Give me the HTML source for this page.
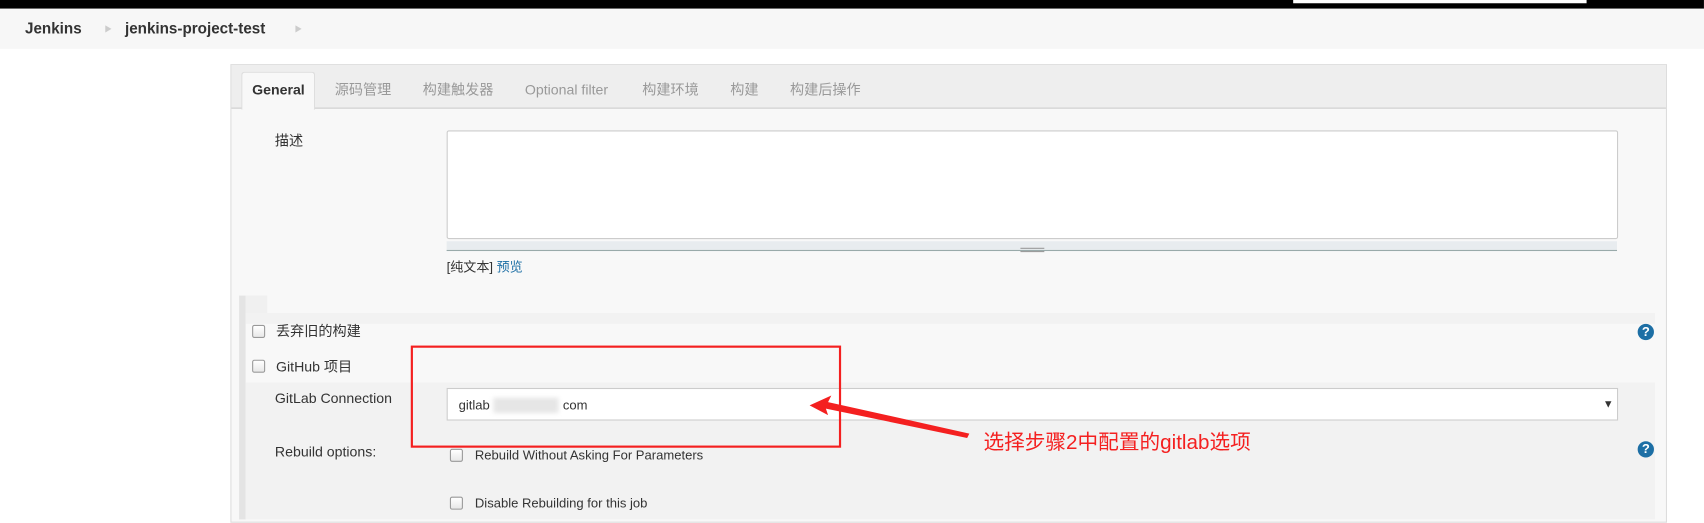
<!DOCTYPE html>
<html><head><meta charset="utf-8"><style>
body{margin:0;width:1704px;height:518px;overflow:hidden;background:#fff;font-family:"Liberation Sans","Noto Sans CJK SC",sans-serif;}
#w{position:absolute;left:0;top:0;width:1568px;height:477px;transform:scale(1.0867);transform-origin:0 0;font-size:13px;color:#333;line-height:15px}
.a{position:absolute}
.cb{position:absolute;width:10px;height:10px;border:1px solid #999;border-radius:2px;background:linear-gradient(#fff,#e8e8e8)}
.q{position:absolute;width:15px;height:15px;border-radius:50%;background:#1d6fa5;color:#fff;font-weight:bold;font-size:12px;text-align:center;line-height:15px}
.tab{position:absolute;top:75px;color:#999;font-size:13px}
</style></head><body><div id="w">
<div class="a" style="left:0;top:0;width:1568px;height:8px;background:#000"></div>
<div class="a" style="left:1190px;top:0;width:270px;height:3px;background:#fff"></div>
<div class="a" style="left:0;top:8px;width:1568px;height:37px;background:#f7f7f7"></div>
<div class="a" style="left:23px;top:19px;font-weight:bold;font-size:14px;color:#333">Jenkins</div>
<div class="a" style="left:96px;top:20px;color:#ccc;font-size:7px">▶</div>
<div class="a" style="left:115px;top:19px;font-weight:bold;font-size:14px;color:#333">jenkins-project-test</div>
<div class="a" style="left:271px;top:20px;color:#ccc;font-size:7px">▶</div>
<div class="a" style="left:212px;top:59px;width:1320px;height:420px;border:1px solid #ddd;background:#f8f8f8"></div>
<div class="a" style="left:213px;top:60px;width:1320px;height:39px;background:#eee;border-bottom:1px solid #ccc"></div>
<div class="a" style="left:222px;top:66px;width:66px;height:34px;background:#f8f8f8;border:1px solid #ddd;border-bottom:none;border-radius:3px 3px 0 0"></div>
<div class="tab" style="left:232px;color:#333;font-weight:bold">General</div>
<div class="tab" style="left:308px">源码管理</div>
<div class="tab" style="left:389px">构建触发器</div>
<div class="tab" style="left:483px">Optional filter</div>
<div class="tab" style="left:591px">构建环境</div>
<div class="tab" style="left:672px">构建</div>
<div class="tab" style="left:727px">构建后操作</div>
<div class="a" style="left:253px;top:122px">描述</div>
<div class="a" style="left:411px;top:120px;width:1076px;height:98px;background:#fff;border:1px solid #ccc;border-radius:2px"></div>
<div class="a" style="left:411px;top:222px;width:1077px;height:8px;background:#e8ecef;border-bottom:1px solid #9aa;"></div>
<div class="a" style="left:939px;top:228px;width:22px;height:2px;border-top:1px solid #999;border-bottom:1px solid #999"></div>
<div class="a" style="left:411px;top:239px;font-size:12px">[纯文本] <span style="color:#1d6fa5">预览</span></div>
<div class="a" style="left:220px;top:272px;width:6px;height:206px;background:#e4e4e4"></div>
<div class="a" style="left:226px;top:272px;width:20px;height:16px;background:#f0f0f0"></div>
<div class="a" style="left:226px;top:288px;width:1297px;height:10px;background:#f2f2f2"></div>
<div class="cb" style="left:232px;top:299px"></div>
<div class="a" style="left:254px;top:297px">丢弃旧的构建</div>
<div class="q" style="left:1507px;top:298px">?</div>
<div class="cb" style="left:232px;top:331px"></div>
<div class="a" style="left:254px;top:330px">GitHub 项目</div>
<div class="a" style="left:226px;top:352px;width:1297px;height:126px;background:#f2f2f2"></div>
<div class="a" style="left:253px;top:359px">GitLab Connection</div>
<div class="a" style="left:411px;top:357px;width:1076px;height:28px;background:#fff;border:1px solid #ccc"></div>
<div class="a" style="left:422px;top:366px;font-size:12px">gitlab</div>
<div class="a" style="left:454px;top:366px;width:60px;height:14px;background:#e6e6e6;filter:blur(2px)"></div>
<div class="a" style="left:518px;top:366px;font-size:12px">com</div>
<div class="a" style="left:1475px;top:365px;font-size:10px">▼</div>
<div class="a" style="left:253px;top:408px">Rebuild options:</div>
<div class="cb" style="left:414px;top:413px"></div>
<div class="a" style="left:437px;top:412px;font-size:12px">Rebuild Without Asking For Parameters</div>
<div class="q" style="left:1507px;top:406px">?</div>
<div class="cb" style="left:414px;top:457px"></div>
<div class="a" style="left:437px;top:456px;font-size:12px">Disable Rebuilding for this job</div>
<div class="a" style="left:378px;top:318px;width:392px;height:90px;border:2px solid #f42020"></div>
<svg class="a" style="left:0;top:0" width="1568" height="477"><polygon points="745,373 765,364 762,370 892,399 890,403 760,376 762,382" fill="#f42020"/></svg>
<div class="a" style="left:905px;top:397px;color:#f42020;font-size:19px;line-height:22px">选择步骤2中配置的gitlab选项</div>
</div></body></html>
